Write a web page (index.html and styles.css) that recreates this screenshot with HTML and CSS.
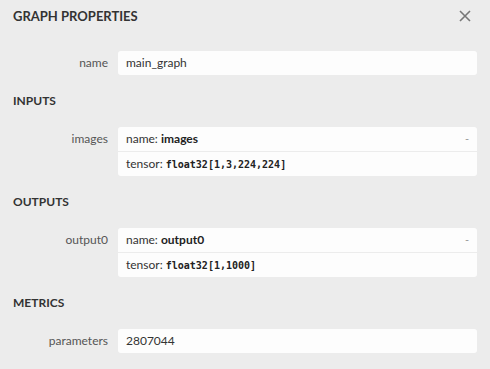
FILE: index.html
```html
<!DOCTYPE html>
<html lang="en">
<head>
  <meta charset="UTF-8" />
  <title>Graph Properties</title>
  <link rel="stylesheet" href="styles.css">
</head>
<body>
  <div class="sidebar">
    <div class="sidebar-header">
      <span class="sidebar-title">GRAPH PROPERTIES</span>
      <svg class="close" width="12" height="12" viewBox="0 0 12 12">
        <path d="M1 1 L11 11 M11 1 L1 11" stroke="#777" stroke-width="1.6" fill="none" />
      </svg>
    </div>

    <div class="item">
      <div class="item-name">name</div>
      <div class="item-value">
        <div class="line">main_graph</div>
      </div>
    </div>

    <div class="section">INPUTS</div>
    <div class="item">
      <div class="item-name">images</div>
      <div class="item-value">
        <div class="line">name: <b>images</b><span class="toggle">-</span></div>
        <div class="line sep">tensor: <code>float32[1,3,224,224]</code></div>
      </div>
    </div>

    <div class="section">OUTPUTS</div>
    <div class="item">
      <div class="item-name">output0</div>
      <div class="item-value">
        <div class="line">name: <b>output0</b><span class="toggle">-</span></div>
        <div class="line sep">tensor: <code>float32[1,1000]</code></div>
      </div>
    </div>

    <div class="section">METRICS</div>
    <div class="item">
      <div class="item-name">parameters</div>
      <div class="item-value">
        <div class="line">2807044</div>
      </div>
    </div>
  </div>
</body>
</html>
```

FILE: styles.css
```css
body { margin: 0; background: #ececec; font-family: Lato, "Noto Sans", sans-serif; font-size: 12px; color: #333; }
.sidebar { padding: 0 13px 0 13px; }
.sidebar-header { height: 32px; display: flex; align-items: center; justify-content: space-between; margin-bottom: 19px; }
.sidebar-title { font-size: 13px; font-weight: bold; color: #333; }
.close { margin-right: 6px; }
.item { display: flex; align-items: flex-start; }
.item-name { width: 95px; padding-right: 10px; text-align: right; line-height: 24px; color: #555; flex-shrink: 0; }
.item-value { flex: 1; background: #fdfdfd; border-radius: 3px; }
.line { height: 24px; line-height: 24px; padding: 0 8px; position: relative; }
.line.sep { border-top: 1px solid #ececec; }
.line b { font-weight: bold; color: #222; }
.toggle { position: absolute; right: 8px; top: 0; color: #999; font-size: 11px; }
code { font-family: "DejaVu Sans Mono", monospace; font-size: 10px; font-weight: bold; color: #222; }
.section { font-weight: bold; line-height: 20px; margin: 16px 0; color: #333; }
```
